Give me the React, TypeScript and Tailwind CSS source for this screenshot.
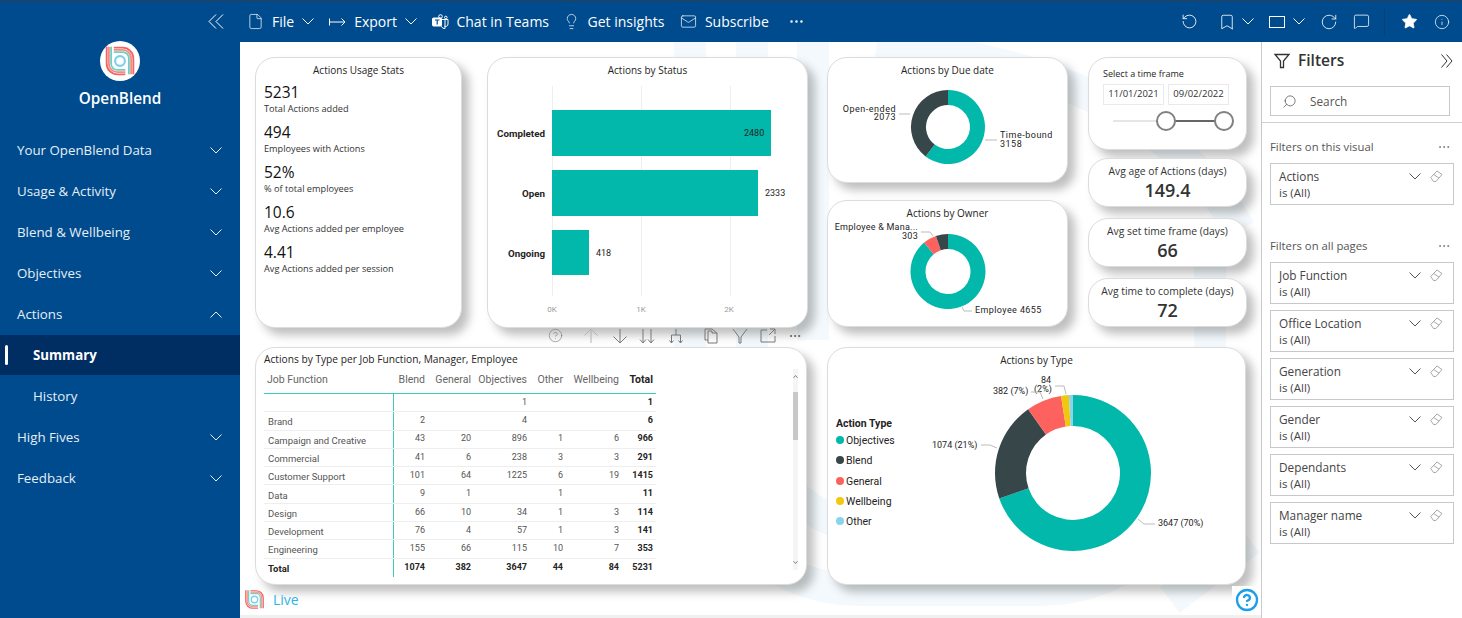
import type { ReactNode } from "react";
import {
  Bookmark,
  CircleHelp,
  Ellipsis,
  File,
  Info,
  Lightbulb,
  Mail,
  MessageSquare,
  RotateCcw,
  RotateCw,
  Search,
  Star,
} from "lucide-react";

const TEAL = "#01B8AA";
const DARK = "#374649";
const RED = "#FD625E";
const YELLOW = "#F2C80F";
const SKY = "#8AD4EB";

type Slice = { value: number; color: string };

function arc(cx: number, cy: number, R: number, r: number, a0: number, a1: number) {
  const p = (rad: number, a: number) => `${cx + rad * Math.sin(a)} ${cy - rad * Math.cos(a)}`;
  const large = a1 - a0 > Math.PI ? 1 : 0;
  return `M${p(R, a0)} A${R} ${R} 0 ${large} 1 ${p(R, a1)} L${p(r, a1)} A${r} ${r} 0 ${large} 0 ${p(r, a0)} Z`;
}

function Donut({ cx, cy, R, r, slices }: { cx: number; cy: number; R: number; r: number; slices: Slice[] }) {
  const total = slices.reduce((s, x) => s + x.value, 0);
  let a = 0;
  return (
    <>
      {slices.map((s) => {
        const start = a;
        a += (s.value / total) * Math.PI * 2;
        return <path key={s.color} d={arc(cx, cy, R, r, start, a)} fill={s.color} />;
      })}
    </>
  );
}

function Logo({ size }: { size: number }) {
  return (
    <svg width={size} height={size} viewBox="0 0 36 36" fill="none" strokeWidth="2.100">
      <path d="M3 2 V21 A12 12 0 0 0 15 33 H24" stroke="#f2646c" />
      <path d="M11 3 H21 A12 12 0 0 1 33 15 V33" stroke="#f2646c" />
      <path d="M5.500 2 V21 A9.500 9.500 0 0 0 15 30.500 H24" stroke="#f98b7a" />
      <path d="M11 5.500 H21 A9.500 9.500 0 0 1 30.500 15 V33" stroke="#f98b7a" />
      <path d="M8 2 V21 A7 7 0 0 0 15 28 H24" stroke="#6fcfc6" />
      <path d="M11 8 H21 A7 7 0 0 1 28 15 V33" stroke="#6fcfc6" />
      <circle cx="18" cy="18" r="5.500" stroke="#7fd0e6" strokeWidth="2.400" />
    </svg>
  );
}

function Caret({ up, className = "" }: { up?: boolean; className?: string }) {
  return (
    <svg width="12" height="7" viewBox="0 0 12 7" fill="none" stroke="currentColor" className={`shrink-0 ${className}`}>
      <path d={up ? "M0.500 6.500 L6 1 L11.500 6.500" : "M0.500 0.500 L6 6 L11.500 0.500"} />
    </svg>
  );
}

function TeamsIcon() {
  return (
    <svg width="17" height="16" viewBox="0 0 17 16" fill="none" stroke="#fff" strokeWidth="1">
      <rect x="0.500" y="4" width="9" height="8" rx="1" fill="#fff" />
      <path d="M3 6 H7.500 M5.200 6 V10.500" stroke="#004b8d" strokeWidth="1.200" />
      <circle cx="8.500" cy="2.500" r="1.800" />
      <circle cx="13.800" cy="3.500" r="1.300" />
      <path d="M9.500 5.500 H16 V10 A2.500 2.500 0 0 1 12.500 12.300 M9.500 12 V12.500 A3.300 3.300 0 0 0 13 14.500 V6" />
    </svg>
  );
}

function ExportIcon() {
  return (
    <svg width="17" height="10" viewBox="0 0 17 10" fill="none" stroke="#fff" strokeWidth="1">
      <path d="M0.500 1.500 V8.500 M1 5 H16 M12.500 1.500 L16 5 L12.500 8.500" />
    </svg>
  );
}

function Eraser() {
  return (
    <svg width="13" height="13" viewBox="0 0 13 13" fill="none" stroke="#a8a8a8" strokeWidth="1">
      <path d="M0.800 7.500 L7 1 L12 4.500 L6 11.500 H3.500 Z M3.800 4.500 L9 8.200" />
    </svg>
  );
}

function TopItem({ icon, label, caret, className = "gap-[8px]" }: { icon: ReactNode; label: string; caret?: boolean; className?: string }) {
  return (
    <div className={`flex items-center ${className}`}>
      {icon}
      <span>{label}</span>
      {caret && <Caret />}
    </div>
  );
}

function TopBar() {
  return (
    <header className="flex h-[41px] items-center bg-[#004b8d] pr-[12px] text-[14px] text-white">
      <div className="flex items-center gap-[15.500px] pl-[7px]">
        <TopItem icon={<File size={17} strokeWidth={1} />} label="File" caret />
        <TopItem icon={<ExportIcon />} label="Export" caret className="-ml-[0.500px] gap-[8px]" />
        <TopItem icon={<TeamsIcon />} label="Chat in Teams" className="gap-[7px]" />
        <TopItem icon={<Lightbulb size={17} strokeWidth={1} />} label="Get insights" className="-ml-[2px] gap-[8px]" />
        <TopItem icon={<Mail size={17} strokeWidth={1} />} label="Subscribe" />
        <Ellipsis size={17} strokeWidth={1.500} className="ml-[4px]" />
      </div>
      <div className="ml-auto flex items-center">
        <RotateCcw size={17} strokeWidth={1.200} />
        <Bookmark size={18} strokeWidth={1.100} className="ml-[20px]" />
        <Caret className="ml-[6px]" />
        <div className="ml-[15px] h-[12px] w-[16px] border border-white" />
        <Caret className="ml-[8px]" />
        <RotateCw size={18} strokeWidth={1.100} className="ml-[15px]" />
        <MessageSquare size={17} strokeWidth={1.100} className="ml-[15px]" />
        <div className="ml-[14px] h-[28px] w-px bg-[#0b3f73]" />
        <Star size={17} fill="#fff" strokeWidth={1} className="ml-[16px]" />
        <Info size={16} strokeWidth={1.100} className="ml-[16px]" />
      </div>
    </header>
  );
}

const NAV_TOP = ["Your OpenBlend Data", "Usage & Activity", "Blend & Wellbeing", "Objectives"];

function NavRow({ label, open }: { label: string; open?: boolean }) {
  return (
    <div className="flex h-[41px] items-center justify-between pl-[17px] pr-[18px]">
      <span>{label}</span>
      <Caret up={open} />
    </div>
  );
}

function Sidebar() {
  return (
    <aside className="flex w-[240px] shrink-0 flex-col bg-[#004b8d] text-[13.300px] text-[#e6eef6]">
      <div className="flex h-[41px] items-center justify-end pr-[16px]">
        <svg width="16" height="15" viewBox="0 0 16 15" fill="none" stroke="#fff">
          <path d="M8 0.500 L1 7.500 L8 14.500 M15 0.500 L8 7.500 L15 14.500" />
        </svg>
      </div>
      <div className="flex h-[88px] flex-col items-center text-white">
        <div className="-mt-[1px] flex h-[40px] w-[40px] items-center justify-center rounded-full bg-white">
          <Logo size={32} />
        </div>
        <span className="mt-[6px] text-[15.300px] font-semibold leading-[22px]">OpenBlend</span>
      </div>
      {NAV_TOP.map((n) => (
        <NavRow key={n} label={n} />
      ))}
      <NavRow label="Actions" open />
      <div className="flex h-[40px] items-center bg-[#002d62] pl-[5px] font-bold text-white">
        <div className="h-[20px] w-[3px] rounded-full bg-white" />
        <span className="ml-[25px] pt-[1px]">Summary</span>
      </div>
      <div className="flex h-[42px] items-center pl-[33px] pt-[1px]">History</div>
      <NavRow label="High Fives" />
      <NavRow label="Feedback" />
    </aside>
  );
}

function Card({ className, children }: { className: string; children: ReactNode }) {
  return (
    <section
      className={`flex flex-col rounded-[20px] border border-[#dcdcdc] bg-white shadow-[7px_7px_10px_rgba(0,0,0,0.25)] ${className}`}
    >
      {children}
    </section>
  );
}

function Title({ children }: { children: ReactNode }) {
  return <h3 className="h-[23px] shrink-0 pt-[4px] text-center text-[10px] leading-[16px] text-[#252423]">{children}</h3>;
}

const STATS = [
  ["5231", "Total Actions added"],
  ["494", "Employees with Actions"],
  ["52%", "% of total employees"],
  ["10.6", "Avg Actions added per employee"],
  ["4.41", "Avg Actions added per session"],
];

function UsageCard() {
  return (
    <Card className="w-[207px]">
      <Title>Actions Usage Stats</Title>
      <div className="flex flex-col gap-[7px] pl-[8px] pt-[1px]">
        {STATS.map(([v, l]) => (
          <div key={l}>
            <div className="text-[15.500px] font-medium leading-[20px] text-[#111]">{v}</div>
            <div className="pt-[1px] text-[9.200px] leading-[12px] text-[#333]">{l}</div>
          </div>
        ))}
      </div>
    </Card>
  );
}

const chartText = { fontFamily: "Roboto, sans-serif", fontSize: 9, fill: "#252423" };

function StatusCard() {
  return (
    <Card className="w-[321px]">
      <Title>Actions by Status</Title>
      <svg viewBox="488 81 319 246" className="w-full flex-1 overflow-visible">
        {[552, 641, 730].map((x) => (
          <line key={x} x1={x + 0.5} x2={x + 0.5} y1="86" y2="296" stroke="#eeeeee" />
        ))}
        <rect x="552" y="110" width="219" height="46" fill={TEAL} />
        <rect x="552" y="170" width="206" height="46" fill={TEAL} />
        <rect x="552" y="230" width="37" height="45" fill={TEAL} />
        <g {...chartText} fontSize="9.800" fontWeight="700" textAnchor="end">
          <text x="545" y="137">Completed</text>
          <text x="545" y="197">Open</text>
          <text x="545" y="257">Ongoing</text>
        </g>
        <g {...chartText}>
          <text x="744" y="136">2480</text>
          <text x="765" y="196">2333</text>
          <text x="596" y="256">418</text>
        </g>
        <g {...chartText} fontSize="8" fill="#999" textAnchor="middle">
          <text x="552" y="312">0K</text>
          <text x="641" y="312">1K</text>
          <text x="729" y="312">2K</text>
        </g>
      </svg>
    </Card>
  );
}

function DueCard() {
  return (
    <Card className="h-[126px]">
      <Title>Actions by Due date</Title>
      <svg viewBox="828 81 239 101" className="w-full flex-1 overflow-visible">
        <Donut cx={948} cy={127} R={37} r={22} slices={[{ value: 3158, color: TEAL }, { value: 2073, color: DARK }]} />
        <g {...chartText} textAnchor="end" letterSpacing="0.5">
          <text x="896" y="112">Open-ended</text>
          <text x="896" y="120">2073</text>
        </g>
        <g {...chartText} letterSpacing="0.5">
          <text x="1000" y="138">Time-bound</text>
          <text x="1000" y="147">3158</text>
        </g>
        <path d="M899 114 H910 M985 140 H997" stroke="#bbb" fill="none" />
      </svg>
    </Card>
  );
}

function OwnerCard() {
  return (
    <Card className="h-[127px]">
      <Title>Actions by Owner</Title>
      <svg viewBox="828 224 239 102" className="w-full flex-1 overflow-visible">
        <Donut
          cx={948}
          cy={271.5}
          R={37.5}
          r={22.5}
          slices={[{ value: 4655, color: TEAL }, { value: 303, color: RED }, { value: 273, color: DARK }]}
        />
        <g {...chartText} textAnchor="end" letterSpacing="0.25">
          <text x="918" y="230">Employee &amp; Mana...</text>
          <text x="918" y="239">303</text>
        </g>
        <text {...chartText} x="975" y="313" letterSpacing="0.4">Employee 4655</text>
        <path d="M921 232 H930 L933 236 M962 307 L964 311 H972" stroke="#bbb" fill="none" />
      </svg>
    </Card>
  );
}

function TimeCard() {
  return (
    <Card className="h-[93px] px-[14px] pt-[9px]">
      <div className="text-[9px] leading-[14px] text-[#252423]">Select a time frame</div>
      <div className="mt-[3px] flex gap-[4px] text-[9.500px] text-[#333]">
        <div className="flex h-[21px] w-[61px] items-center justify-center border border-[#eaeaea]">11/01/2021</div>
        <div className="flex h-[21px] w-[61px] items-center justify-center border border-[#eaeaea]">09/02/2022</div>
      </div>
      <div className="relative mt-[5px] h-[22px]">
        <div className="absolute left-[10px] right-0 top-[10px] h-[2px] bg-[#e6e6e6]" />
        <div className="absolute left-[63px] right-[8px] top-[10px] h-[2px] bg-[#666]" />
        <div className="absolute left-[53px] top-[1px] h-[20px] w-[20px] rounded-full border-2 border-[#808080] bg-white" />
        <div className="absolute left-[111px] top-[1px] h-[20px] w-[20px] rounded-full border-2 border-[#808080] bg-white" />
      </div>
    </Card>
  );
}

function Kpi({ label, value }: { label: string; value: string }) {
  return (
    <Card className="h-[49px] items-center pt-[5px]">
      <div className="whitespace-nowrap text-[10.300px] leading-[14px] text-[#333]">{label}</div>
      <div className="text-[18px] font-semibold leading-[24px] text-[#333]">{value}</div>
    </Card>
  );
}

const COLS = ["w-[34px]", "w-[46px]", "w-[56px]", "w-[36px]", "w-[56px]", "w-[34px]"];

const ROWS: [string, ...string[]][] = [
  ["", "", "", "1", "", "", "1"],
  ["Brand", "2", "", "4", "", "", "6"],
  ["Campaign and Creative", "43", "20", "896", "1", "6", "966"],
  ["Commercial", "41", "6", "238", "3", "3", "291"],
  ["Customer Support", "101", "64", "1225", "6", "19", "1415"],
  ["Data", "9", "1", "", "1", "", "11"],
  ["Design", "66", "10", "34", "1", "3", "114"],
  ["Development", "76", "4", "57", "1", "3", "141"],
  ["Engineering", "155", "66", "115", "10", "7", "353"],
];

function TableRow({ row, total }: { row: string[]; total?: boolean }) {
  return (
    <div className={`flex h-[18.300px] items-center ${total ? "font-bold text-[#252423]" : "border-b border-[#eeeeee] text-[#555]"}`}>
      <div className="flex h-full w-[129px] items-center whitespace-nowrap pl-[4px] pt-[3px] text-[9.500px]">{row[0]}</div>
      <div className="h-full w-px bg-[#3fcabd]" />
      {row.slice(1).map((c, i) => (
        <div key={i} className={`${COLS[i]} pr-[3px] text-right ${i === 5 ? "font-bold text-[#252423]" : ""}`}>
          {c}
        </div>
      ))}
    </div>
  );
}

function TableCard() {
  return (
    <Card className="relative h-[238px] w-[552px] px-[8px] pt-[4px]">
      <div className="text-[10.200px] leading-[14px] text-[#252423]">Actions by Type per Job Function, Manager, Employee</div>
      <div className="mt-[2px] w-[392px] font-['Roboto',sans-serif] text-[9px]">
        <div className="flex h-[25px] items-center whitespace-nowrap pb-[2px] text-[10.500px] text-[#666]">
          <div className="w-[130px] pl-[3px]">Job Function</div>
          {["Blend", "General", "Objectives", "Other", "Wellbeing"].map((h, i) => (
            <div key={h} className={`${COLS[i]} pr-[3px] text-right`}>
              {h}
            </div>
          ))}
          <div className="w-[34px] pr-[3px] text-right font-bold text-[#252423]">Total</div>
        </div>
        <div className="h-px bg-[#3fcabd]" />
        {ROWS.map((r) => (
          <TableRow key={r[0]} row={r} />
        ))}
        <TableRow total row={["Total", "1074", "382", "3647", "44", "84", "5231"]} />
      </div>
      <div className="absolute right-[8px] top-[21px] flex h-[201px] w-[5px] flex-col items-center justify-between bg-[#f5f5f5] py-[6px] text-[#666]">
        <svg width="5" height="3" viewBox="0 0 5 3" fill="none" stroke="currentColor" strokeWidth="0.800"><path d="M0.500 2.800 L2.500 0.500 L4.500 2.800" /></svg>
        <svg width="5" height="3" viewBox="0 0 5 3" fill="none" stroke="currentColor" strokeWidth="0.800"><path d="M0.500 0.200 L2.500 2.500 L4.500 0.200" /></svg>
        <div className="absolute left-0 top-[23px] h-[48px] w-[5px] bg-[#c8c8c8]" />
      </div>
    </Card>
  );
}

function TypeCard() {
  return (
    <Card className="h-[238px] w-[419px]">
      <Title>Actions by Type</Title>
      <svg viewBox="828 371 417 213" className="w-full flex-1 overflow-visible">
        <Donut
          cx={1073}
          cy={473}
          R={78}
          r={47}
          slices={[
            { value: 3647, color: TEAL },
            { value: 1074, color: DARK },
            { value: 382, color: RED },
            { value: 84, color: YELLOW },
            { value: 44, color: SKY },
          ]}
        />
        <text {...chartText} fontSize="10.500" fontWeight="700" x="836" y="427">Action Type</text>
        {[
          ["Objectives", TEAL, 440],
          ["Blend", DARK, 460],
          ["General", RED, 481],
          ["Wellbeing", YELLOW, 501],
          ["Other", SKY, 521],
        ].map(([label, color, y]) => (
          <g key={label as string}>
            <circle cx="840" cy={y as number} r="4" fill={color as string} />
            <text {...chartText} fontSize="10.500" x="846" y={(y as number) + 3.5}>{label as string}</text>
          </g>
        ))}
        <g {...chartText}>
          <text x="932" y="448">1074 (21%)</text>
          <text x="993" y="394">382 (7%)</text>
          <text x="1041" y="383">84</text>
          <text x="1034" y="392">(2%)</text>
          <text x="1158" y="526">3647 (70%)</text>
        </g>
        <path
          d="M981 445 H990 L997 448 M1031 392 H1040 L1043 399 M1055 386 H1064 L1066 394 M1138 519 L1144 524 H1155"
          stroke="#bbb"
          fill="none"
        />
      </svg>
    </Card>
  );
}

function VisualHeader() {
  const cls = "text-[#777]";
  return (
    <div className="flex h-[19px] items-center justify-end pb-[4px] pr-[6px]">
      <CircleHelp size={15} strokeWidth={1} className={`${cls} mr-[20px]`} />
      <svg width="16" height="16" viewBox="0 0 16 16" fill="none" stroke="#b4b4b4" className="mr-[13px]"><path d="M8 15 V1 M1.500 7.500 L8 1 L14.500 7.500" /></svg>
      <svg width="16" height="16" viewBox="0 0 16 16" fill="none" stroke="#777" className="mr-[11px]"><path d="M8 1 V15 M1.500 8.500 L8 15 L14.500 8.500" /></svg>
      <svg width="16" height="16" viewBox="0 0 16 16" fill="none" stroke="#777" className="mr-[13px]"><path d="M4 1 V15 M1 11.500 L4 15 L7 11.500 M12 1 V15 M9 11.500 L12 15 L15 11.500" /></svg>
      <svg width="16" height="16" viewBox="0 0 16 16" fill="none" stroke="#777" className="mr-[20px]"><path d="M8 1 V7 M3.500 15 V7 H12.500 V15 M1.500 12.500 L3.500 15 L5.500 12.500 M10.500 12.500 L12.500 15 L14.500 12.500" /></svg>
      <svg width="15" height="16" viewBox="0 0 15 16" fill="none" stroke="#777" className="mr-[13px]"><path d="M4 12 H1 V1 H8 L13 5 V15 H4 V3 H8 V5 H13" /></svg>
      <svg width="16" height="16" viewBox="0 0 16 16" fill="none" stroke="#777" className="mr-[12px]"><path d="M1 1 L7 9 V15 H9 V9 L15 1" /></svg>
      <svg width="16" height="16" viewBox="0 0 16 16" fill="none" stroke="#777" className="mr-[12px]"><path d="M7 2 H1 V14 H15 V8 M9 7 L15 1 M10 1 H15 V6" /></svg>
      <Ellipsis size={14} strokeWidth={1.500} className="text-[#555]" />
    </div>
  );
}

function Watermark() {
  return (
    <svg viewBox="240 42 1021 576" className="absolute inset-0 h-full w-full" fill="none" stroke="#f3f9fd" strokeWidth="32">
      <path d="M690 42 V420 A170 170 0 0 0 860 590 H1040 A170 170 0 0 0 1210 420 V250" />
      <path d="M752 42 V400 A130 130 0 0 0 882 530 H1020" />
      <path d="M813 42 V340" />
      <path d="M877 42 C1010 60 1160 90 1240 230" />
      <path d="M1170 600 L1250 540" />
    </svg>
  );
}

function Canvas() {
  return (
    <main className="relative flex min-w-0 flex-1 flex-col bg-white">
      <Watermark />
      <div className="relative flex gap-[19px] pl-[15px] pt-[15px]">
        <div className="flex w-[553px] flex-col">
          <div className="flex h-[271px] gap-[25px]">
            <UsageCard />
            <StatusCard />
          </div>
          <VisualHeader />
          <TableCard />
        </div>
        <div className="flex flex-col gap-[19px]">
          <div className="flex h-[271px] gap-[20px]">
            <div className="flex w-[241px] flex-col gap-[17px]">
              <DueCard />
              <OwnerCard />
            </div>
            <div className="flex w-[159px] flex-col">
              <TimeCard />
              <div className="mt-[8px] flex flex-col gap-[11px]">
                <Kpi label="Avg age of Actions (days)" value="149.4" />
                <Kpi label="Avg set time frame (days)" value="66" />
                <Kpi label="Avg time to complete (days)" value="72" />
              </div>
            </div>
          </div>
          <TypeCard />
        </div>
      </div>
      <div className="relative mt-[1px] flex h-[27px] items-center justify-between pl-[4px]">
        <div className="flex items-center gap-[8px]">
          <Logo size={21} />
          <span className="text-[14px] text-[#2fb4e8]">Live</span>
        </div>
        <div className="flex h-[27px] w-[29px] items-center justify-center bg-white">
          <CircleHelp size={24} strokeWidth={2.300} className="text-[#1a9fe8]" />
        </div>
      </div>
      <div className="relative mt-auto h-[3px] bg-[#f0f0f0]" />
    </main>
  );
}

function FilterCard({ name }: { name: string }) {
  return (
    <div className="flex h-[42px] justify-between border border-[#c8c8c8] pl-[8px] pr-[10px] pt-[4px] text-[#444]">
      <div>
        <div className="text-[11.800px] leading-[16px]">{name}</div>
        <div className="pt-[1px] text-[11.500px] leading-[16px]">is (All)</div>
      </div>
      <div className="flex h-[16px] items-center gap-[9px] pt-[1px]">
        <Caret className="text-[#555]" />
        <Eraser />
      </div>
    </div>
  );
}

function FilterHeading({ label }: { label: string }) {
  return (
    <div className="flex items-center justify-between pr-[3px] text-[11.300px] leading-[16px] text-[#555]">
      <span>{label}</span>
      <Ellipsis size={14} strokeWidth={1} />
    </div>
  );
}

const PAGE_FILTERS = ["Job Function", "Office Location", "Generation", "Gender", "Dependants", "Manager name"];

function FilterPane() {
  return (
    <aside className="flex w-[201px] shrink-0 flex-col border-l border-[#c8ccd0] bg-white">
      <div className="flex h-[37px] items-center pl-[12px] pr-[9px] pt-[1px]">
        <svg width="16" height="16" viewBox="0 0 16 16" fill="none" stroke="#333" strokeWidth="1.300">
          <path d="M1 1.500 H15 L9.500 8 V14.500 H6.500 V8 Z" />
        </svg>
        <span className="ml-[8px] text-[15.500px] font-semibold text-[#333]">Filters</span>
        <svg width="12" height="14" viewBox="0 0 12 14" fill="none" stroke="#333" className="ml-auto">
          <path d="M0.500 0.500 L6 7 L0.500 13.500 M5.500 0.500 L11 7 L5.500 13.500" />
        </svg>
      </div>
      <div className="ml-[8px] mr-[12px] mt-[7px] flex h-[30px] items-center gap-[13px] border border-[#c8c8c8] pl-[11px] pt-[1px] text-[11.800px] text-[#555]">
        <Search size={15} strokeWidth={1} className="-scale-x-100 text-[#333]" />
        <span>Search</span>
      </div>
      <div className="mt-[6px] border-b border-[#d0d0d0]" />
      <div className="pl-[8px] pr-[8px] pt-[16px]">
        <FilterHeading label="Filters on this visual" />
        <div className="mt-[8px]">
          <FilterCard name="Actions" />
        </div>
        <div className="mt-[33px]">
          <FilterHeading label="Filters on all pages" />
        </div>
        <div className="mt-[8px] flex flex-col gap-[6px]">
          {PAGE_FILTERS.map((f) => (
            <FilterCard key={f} name={f} />
          ))}
        </div>
      </div>
    </aside>
  );
}

export default function App() {
  return (
    <div className="flex h-[618px] w-[1462px] flex-col overflow-hidden border-t border-[#2d3e50] bg-white font-['Open_Sans',sans-serif]">
      <div className="flex min-h-0 flex-1">
        <Sidebar />
        <div className="flex min-w-0 flex-1 flex-col">
          <TopBar />
          <div className="flex min-h-0 flex-1">
            <Canvas />
            <FilterPane />
          </div>
        </div>
      </div>
    </div>
  );
}
